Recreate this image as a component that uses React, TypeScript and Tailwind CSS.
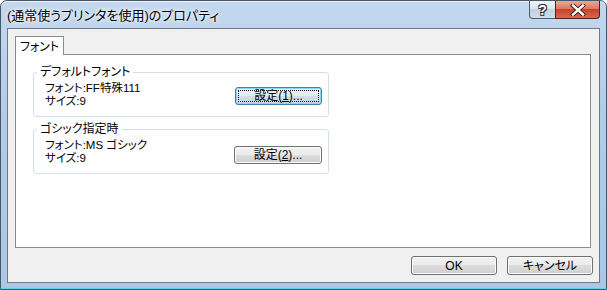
import React from "react";

const FONT = "font-['Liberation_Sans','Noto_Sans_CJK_JP',sans-serif] [font-feature-settings:'palt']";

function VistaButton({
  children,
  focused = false,
  className = "",
}: {
  children: React.ReactNode;
  focused?: boolean;
  className?: string;
}) {
  return (
    <button
      className={`flex items-center justify-center rounded-[3px] border text-[12px] leading-none text-black ${
        focused
          ? "border-[#3c7fb1] bg-[linear-gradient(to_bottom,#eef4f9_0%,#e2ebf2_50%,#d3dee8_50%,#c6d3df_100%)] shadow-[inset_0_0_0_1px_#8fd5f5] [outline:1px_dotted_#000] [outline-offset:-4px]"
          : "border-[#707070] bg-[linear-gradient(to_bottom,#f2f2f2_0%,#ebebeb_50%,#dddddd_50%,#cfcfcf_100%)] shadow-[inset_0_0_0_1px_#fcfcfc]"
      } ${className}`}
    >
      {children}
    </button>
  );
}

function GroupBox({
  label,
  font,
  size,
  button,
  className = "",
}: {
  label: string;
  font: string;
  size: string;
  button: React.ReactNode;
  className?: string;
}) {
  return (
    <fieldset
      className={`w-[296px] rounded-[3px] border border-[#d5dfe5] pb-[8px] pl-[11px] pr-[6px] pt-[4px] ${className}`}
    >
      <legend className="-ml-[8px] px-[3px] text-[12px] leading-[12px]">{label}</legend>
      <div className="flex items-end justify-between">
        <p className="text-[11.5px] leading-[13px]">
          {font}
          <br />
          {size}
        </p>
        {button}
      </div>
    </fieldset>
  );
}

function CloseGlyph() {
  return (
    <svg width="16" height="12" viewBox="0 0 16 12">
      <path
        d="M3 1.5 L13 10.5 M13 1.5 L3 10.5"
        stroke="#3b1a14"
        strokeWidth="4.2"
        strokeLinecap="square"
      />
      <path
        d="M3 1.5 L13 10.5 M13 1.5 L3 10.5"
        stroke="#ffffff"
        strokeWidth="2.4"
        strokeLinecap="square"
      />
    </svg>
  );
}

export default function App() {
  return (
    <div className={`${FONT} h-[290px] w-[607px] bg-white`}>
      <div className="flex h-[290px] w-[607px] flex-col rounded-t-[7px] border border-[#46566b] bg-[linear-gradient(to_bottom,#c3d8ee_0%,#b2cce6_40%,#abc7e3_100%)] shadow-[inset_0_1px_0_#eef5fc]">
        {/* Title bar */}
        <div className="flex h-[27px] shrink-0">
          <div className="self-center pl-[6px] pt-[1px] text-[13px] leading-none text-black [text-shadow:0_0_6px_#ffffff,0_0_3px_#ffffff]">
            (通常使うプリンタを使用)のプロパティ
          </div>
          <div className="ml-auto mr-[6px] flex self-start">
            <div className="flex h-[18px] w-[27px] items-center justify-center rounded-bl-[4px] border border-t-0 border-[#4f5d70] bg-[linear-gradient(to_bottom,#eef3f8_0%,#dbe5ef_45%,#c3d2e1_50%,#cfdde9_100%)] text-[14px] font-bold leading-none text-white [text-shadow:0_0_1px_#223,1px_1px_0_#334,-1px_-1px_0_#334,1px_-1px_0_#334,-1px_1px_0_#334]">
              ?
            </div>
            <div className="-ml-px flex h-[18px] w-[45px] items-center justify-center rounded-br-[4px] border border-t-0 border-[#5b1d12] bg-[linear-gradient(to_bottom,#e9a896_0%,#dc7a63_45%,#c7432b_50%,#d56a4f_100%)]">
              <CloseGlyph />
            </div>
          </div>
        </div>

        {/* Client area */}
        <div className="mx-[6px] flex h-[255px] flex-col border border-[#6f7a88] bg-[#f0f0f0] pl-[7px] pr-[8px] pt-[7px]">
          <div className="relative z-10 -mb-px flex h-[19px] w-[49px] items-center justify-center border border-b-0 border-[#898c95] bg-white pt-[1px] text-[12px] leading-none">
            フォント
          </div>
          <div className="flex h-[194px] flex-col border border-[#898c95] bg-white pl-[17px] pt-[11px]">
            <GroupBox
              label="デフォルトフォント"
              font="フォント:FF特殊111"
              size="サイズ:9"
              button={
                <VistaButton focused className="mb-[3px] h-[18px] w-[87px]">
                  設定(<u>1</u>)...
                </VistaButton>
              }
            />
            <GroupBox
              label="ゴシック指定時"
              font="フォント:MS ゴシック"
              size="サイズ:9"
              className="mt-[6px]"
              button={
                <VistaButton className="mb-px h-[18px] w-[88px]">
                  設定(<u>2</u>)...
                </VistaButton>
              }
            />
          </div>
          <div className="flex justify-end gap-[10px] pt-[8px]">
            <VistaButton className="h-[19px] w-[86px]">OK</VistaButton>
            <VistaButton className="-mr-[2px] h-[19px] w-[86px]">キャンセル</VistaButton>
          </div>
        </div>
        <div className="h-[6px] shrink-0 shadow-[inset_0_-1px_0_#5fd0ef]" />
      </div>
    </div>
  );
}
